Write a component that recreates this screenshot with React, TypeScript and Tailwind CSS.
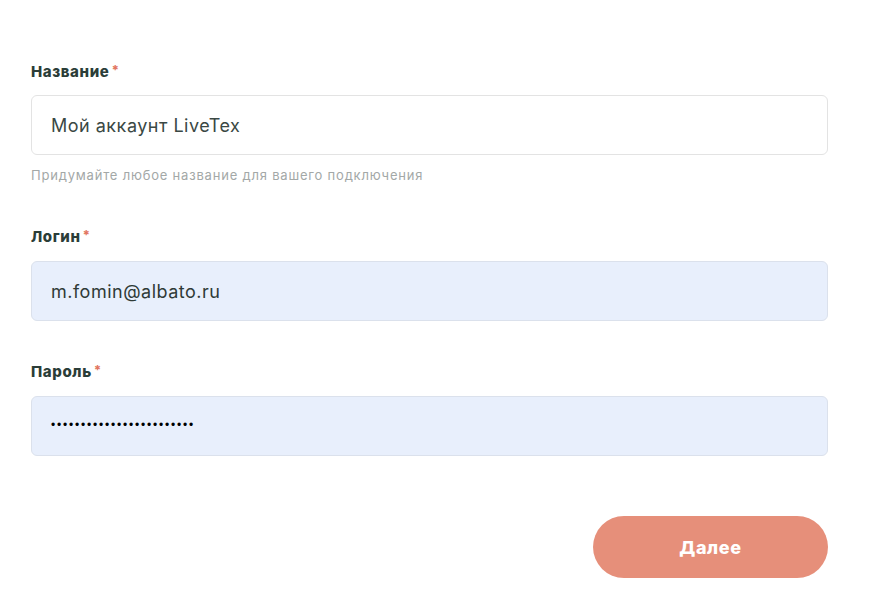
import React from "react";

const font = { fontFamily: "Inter, 'Noto Sans', sans-serif" };

function Label({ text }: { text: string }) {
  return (
    <div className="flex h-5 items-start text-[15px] font-extrabold leading-5 tracking-[0.6px] text-[#2b3d38]">
      {text}
      <span className="ml-[2px] text-[13px] leading-4 text-[#e2765f]">*</span>
    </div>
  );
}

export default function App() {
  return (
    <div className="min-h-[603px] w-[870px] bg-white" style={font}>
      <div className="w-[797px] ml-[31px] pt-[62px]">
        <Label text="Название" />
        <input
          readOnly
          value="Мой аккаунт LiveTex"
          className="mt-[13px] block h-[60px] w-full rounded-[6px] border border-[#e3e3e3] bg-white px-[19px] text-[18px] tracking-[0.5px] text-[#3a4844] outline-none"
          style={font}
        />
        <div className="mt-[11px] text-[13px] leading-[18px] tracking-[0.8px] text-[#a3a8a7]">
          Придумайте любое название для вашего подключения
        </div>

        <div className="mt-[43px]">
          <Label text="Логин" />
        </div>
        <input
          readOnly
          value="m.fomin@albato.ru"
          className="mt-[14px] block h-[60px] w-full rounded-[6px] border border-[#dbe1ec] bg-[#e8effc] px-[19px] text-[18px] tracking-[0.5px] text-[#2f3a37] outline-none"
          style={font}
        />

        <div className="mt-[41px]">
          <Label text="Пароль" />
        </div>
        <div className="mt-[14px] flex h-[60px] w-full items-center rounded-[6px] border border-[#dbe1ec] bg-[#e8effc] px-[19px]">
          <span className="-mt-[2px] text-[12px] tracking-[1.8px] text-black" style={{ fontFamily: "'Liberation Sans', sans-serif" }}>
            ••••••••••••••••••••••••
          </span>
        </div>

        <div className="mt-[60px] flex justify-end">
          <button className="h-[62px] w-[235px] rounded-full bg-[#e68f7a] text-[18px] font-extrabold tracking-[0.6px] text-white">
            Далее
          </button>
        </div>
      </div>
    </div>
  );
}
